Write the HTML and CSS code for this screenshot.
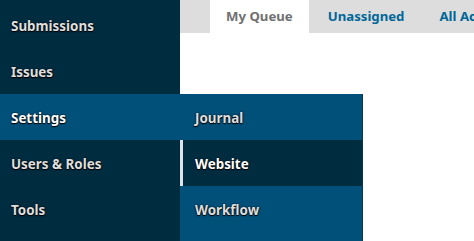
FILE: index.html
```html
<!DOCTYPE html>
<html lang="en">
<head>
<meta charset="utf-8">
<title>OJS</title>
<link rel="stylesheet" href="styles.css">
</head>
<body>
<div class="app">
  <nav class="nav">
    <ul class="nav-list">
      <li class="nav-item"><a class="nav-link" href="#">Submissions</a></li>
      <li class="nav-item"><a class="nav-link" href="#">Issues</a></li>
      <li class="nav-item is-open">
        <a class="nav-link" href="#">Settings</a>
        <ul class="sub-list">
          <li class="sub-item"><a class="sub-link" href="#">Journal</a></li>
          <li class="sub-item is-current"><a class="sub-link" href="#">Website</a></li>
          <li class="sub-item"><a class="sub-link" href="#">Workflow</a></li>
        </ul>
      </li>
      <li class="nav-item"><a class="nav-link" href="#">Users &amp; Roles</a></li>
      <li class="nav-item"><a class="nav-link" href="#">Tools</a></li>
    </ul>
  </nav>
  <main class="main">
    <div class="tabs">
      <a class="tab is-active" href="#">My Queue</a>
      <a class="tab" href="#">Unassigned</a>
      <a class="tab" href="#">All Active</a>
    </div>
  </main>
</div>
</body>
</html>
```

FILE: styles.css
```css
* { box-sizing: border-box; }
html, body {
  margin: 0;
  padding: 0;
  background: #fff;
  overflow: hidden;
}
body {
  font-family: "Noto Sans", "Liberation Sans", sans-serif;
  font-weight: 700;
  font-size: 13.4px;
  width: 474px;
  height: 241px;
}
.app {
  display: grid;
  grid-template-columns: 180px 1fr;
  height: 241px;
}
.nav {
  background: #002c40;
  padding-top: 2px;
  position: relative;
  z-index: 2;
}
.nav-list, .sub-list {
  list-style: none;
  margin: 0;
  padding: 0;
}
.nav-item {
  position: relative;
}
.nav-link, .sub-link {
  display: flex;
  align-items: center;
  height: 46px;
  padding-left: 11px;
  padding-top: 2px;
  color: #dedede;
  text-decoration: none;
  text-shadow: 0 0 2px #000, 0 1px 1px #000;
}
.is-open > .nav-link {
  background: #00507a;
  color: #fff;
}
.sub-list {
  position: absolute;
  top: 0;
  left: 100%;
  width: 183px;
  padding-bottom: 20px;
  background: #00507a;
  border-right: 1px solid #003a58;
}
.sub-link {
  padding-left: 15px;
}
.is-current .sub-link {
  background: #002c40;
  color: #fff;
  border-left: 3px solid #dde3e8;
  padding-left: 12px;
}
.main {
  min-width: 0;
}
.tabs {
  display: flex;
  gap: 3px;
  height: 33px;
  background: #dddddd;
  padding-left: 30px;
  overflow: hidden;
  white-space: nowrap;
  font-size: 13.2px;
}
.tab {
  display: flex;
  align-items: center;
  padding: 0 16px 1px;
  color: #006798;
  text-decoration: none;
}
.tab.is-active {
  background: #fff;
  color: #707070;
}
```
